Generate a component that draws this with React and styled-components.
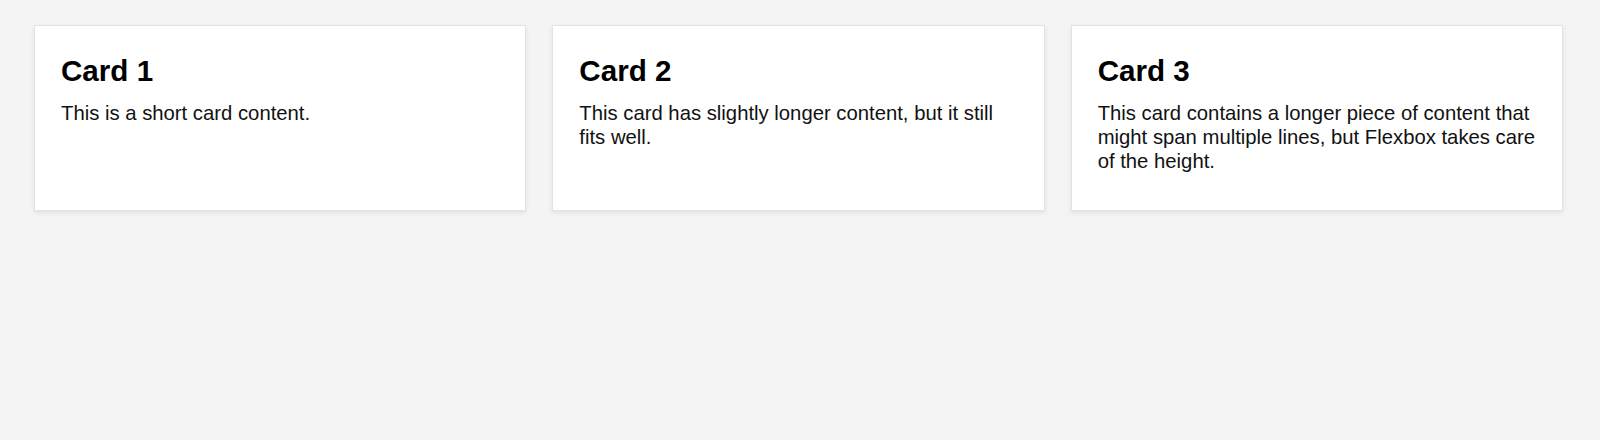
import React from 'react';
import styled, { createGlobalStyle } from 'styled-components';

const GlobalStyle = createGlobalStyle`
    body {
        margin: 0;
        background: #f4f4f4;
        font-family: "Liberation Sans", Arial, sans-serif;
    }
`;

const cards = [
    { title: 'Card 1', text: 'This is a short card content.' },
    { title: 'Card 2', text: 'This card has slightly longer content, but it still fits well.' },
    { title: 'Card 3', text: 'This card contains a longer piece of content that might span multiple lines, but Flexbox takes care of the height.' },
];

const App = () => {
    return (
        <>
            <GlobalStyle />
            <CardRow>
                {cards.map(card => (
                    <Card key={card.title}>
                        <CardTitle>{card.title}</CardTitle>
                        <CardText>{card.text}</CardText>
                    </Card>
                ))}
            </CardRow>
        </>
    )
}

export default App;

const CardRow = styled.div`
    display: flex;
    align-items: stretch;
    gap: 26px;
    padding: 25px 37px 25px 34px;
`;

const Card = styled.div`
    flex: 1;
    background: #ffffff;
    border: 1px solid #e3e3e3;
    box-shadow: 0 2px 5px rgba(0, 0, 0, 0.08);
    padding: 28px 26px 25px 26px;
`;

const CardTitle = styled.h2`
    margin: 0 0 13px;
    font-size: 29.6px;
    font-weight: bold;
    color: #000;
`;

const CardText = styled.p`
    margin: 0 0 12px;
    font-size: 20.3px;
    line-height: 24px;
    color: #111;
`;
